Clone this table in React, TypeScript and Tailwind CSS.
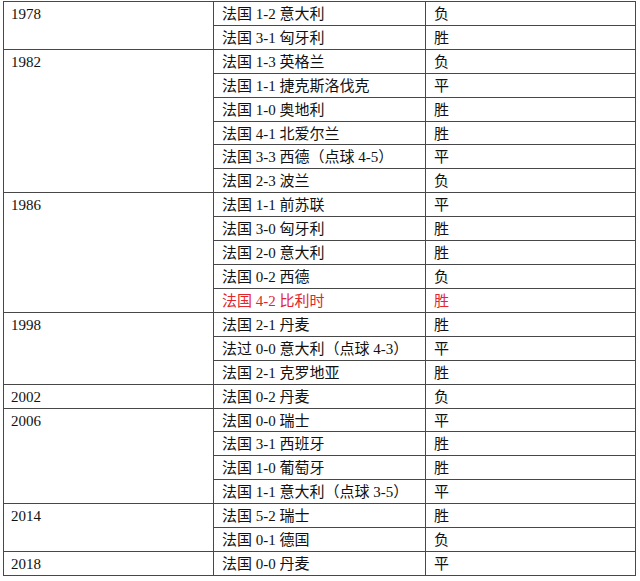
import React from "react";

type Row = { m: string; r: string; red?: boolean };
type Group = { year: string; span: string; rows: Row[] };

const groups: Group[] = [
  { year: "1978", span: "row-span-2", rows: [{ m: "法国 1-2 意大利", r: "负" }, { m: "法国 3-1 匈牙利", r: "胜" }] },
  {
    year: "1982",
    span: "row-span-6",
    rows: [
      { m: "法国 1-3 英格兰", r: "负" },
      { m: "法国 1-1 捷克斯洛伐克", r: "平" },
      { m: "法国 1-0 奥地利", r: "胜" },
      { m: "法国 4-1 北爱尔兰", r: "胜" },
      { m: "法国 3-3 西德（点球 4-5）", r: "平" },
      { m: "法国 2-3 波兰", r: "负" },
    ],
  },
  {
    year: "1986",
    span: "row-span-5",
    rows: [
      { m: "法国 1-1 前苏联", r: "平" },
      { m: "法国 3-0 匈牙利", r: "胜" },
      { m: "法国 2-0 意大利", r: "胜" },
      { m: "法国 0-2 西德", r: "负" },
      { m: "法国 4-2 比利时", r: "胜", red: true },
    ],
  },
  {
    year: "1998",
    span: "row-span-3",
    rows: [
      { m: "法国 2-1 丹麦", r: "胜" },
      { m: "法过 0-0 意大利（点球 4-3）", r: "平" },
      { m: "法国 2-1 克罗地亚", r: "胜" },
    ],
  },
  { year: "2002", span: "row-span-1", rows: [{ m: "法国 0-2 丹麦", r: "负" }] },
  {
    year: "2006",
    span: "row-span-4",
    rows: [
      { m: "法国 0-0 瑞士", r: "平" },
      { m: "法国 3-1 西班牙", r: "胜" },
      { m: "法国 1-0 葡萄牙", r: "胜" },
      { m: "法国 1-1 意大利（点球 3-5）", r: "平" },
    ],
  },
  { year: "2014", span: "row-span-2", rows: [{ m: "法国 5-2 瑞士", r: "胜" }, { m: "法国 0-1 德国", r: "负" }] },
  { year: "2018", span: "row-span-1", rows: [{ m: "法国 0-0 丹麦", r: "平" }] },
];

export default function App() {
  return (
    <div
      className="w-[640px] h-[581px] bg-white pt-[1px] pl-[3px]"
      style={{ fontFamily: '"Liberation Serif", "Noto Sans CJK SC", serif' }}
    >
      <div className="w-[633px] h-[575px] bg-[#484848] p-px grid gap-px grid-cols-[209px_211px_209px] grid-rows-[repeat(24,minmax(0,1fr))] text-[15px] text-[#111111]">
        {groups.map((g) => (
          <React.Fragment key={g.year}>
            <div className={`${g.span} bg-white pl-[7px]`}>
              <div className="h-[22.9px] flex items-center pt-[2px] leading-none">{g.year}</div>
            </div>
            {g.rows.map((r, i) => (
              <React.Fragment key={i}>
                <div
                  className={`bg-white pl-[8px] flex items-center pt-[2px] leading-none whitespace-nowrap ${
                    r.red ? "text-[#e3262c]" : ""
                  }`}
                  style={{ gridColumn: 2 }}
                >
                  {r.m}
                </div>
                <div
                  className={`bg-white pl-[8px] flex items-center pt-[2px] leading-none ${
                    r.red ? "text-[#e3262c]" : ""
                  }`}
                  style={{ gridColumn: 3 }}
                >
                  {r.r}
                </div>
              </React.Fragment>
            ))}
          </React.Fragment>
        ))}
      </div>
    </div>
  );
}
